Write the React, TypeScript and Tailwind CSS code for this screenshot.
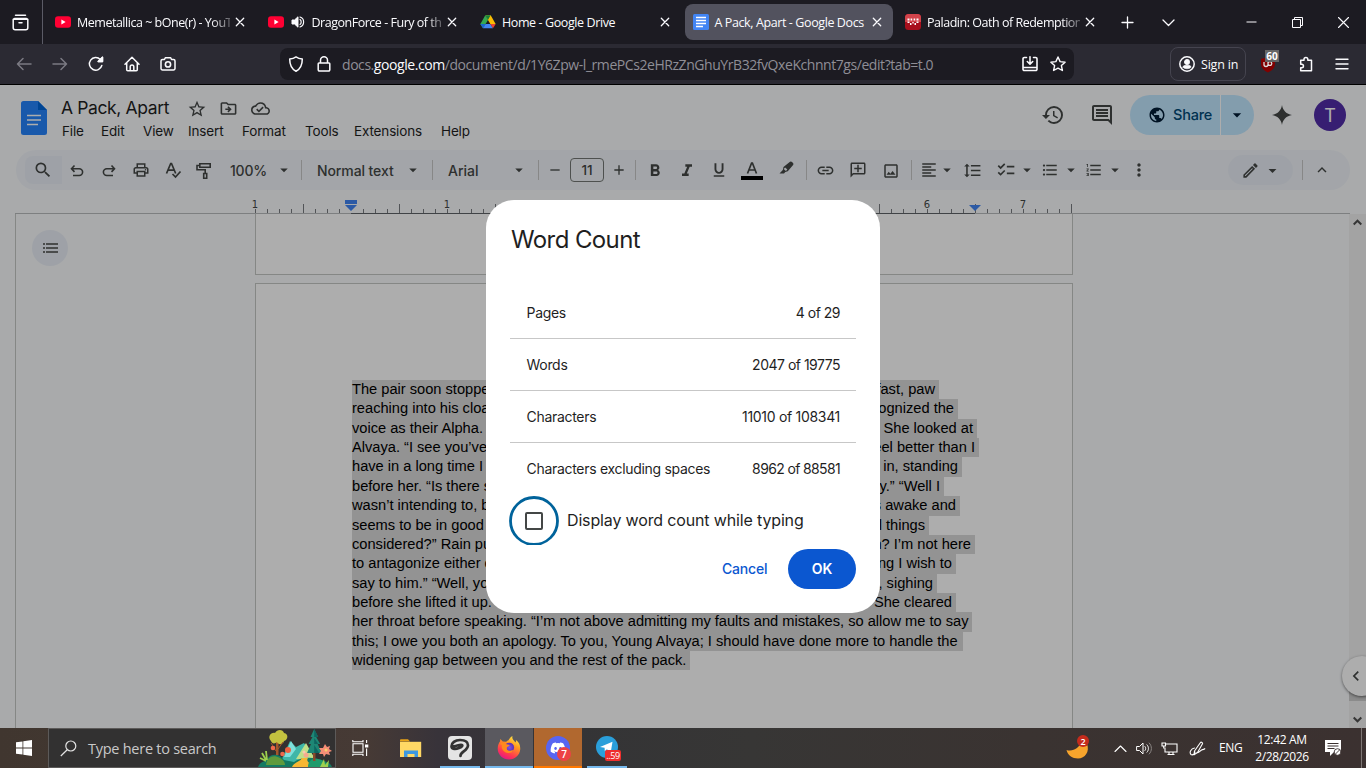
import React from "react";
import {
  MdSearch, MdOutlineLocalPrintshop, MdFormatBold, MdFormatItalic, MdFormatUnderlined,
  MdArrowDropDown, MdAdd, MdRemove, MdLink, MdOutlineAddComment, MdOutlineImage, MdFormatAlignLeft,
  MdFormatLineSpacing, MdChecklist, MdFormatListBulleted, MdFormatListNumbered, MdMoreVert, MdOutlineModeEdit,
  MdKeyboardArrowUp, MdKeyboardArrowLeft, MdHistory, MdOutlineComment, MdPublic, MdStarBorder,
  MdOutlineDriveFileMove, MdOutlineCloudDone,
} from "react-icons/md";
import { FaDiscord } from "react-icons/fa";

const SEGOE = "font-['Open_Sans',sans-serif]";
const GOOGLE = "font-['Inter',sans-serif]";

type SvgProps = { className?: string; box?: string; size?: number; children: React.ReactNode };
const Line = ({ className = "", box = "0 0 16 16", size = 16, children }: SvgProps) => (
  <svg width={size} height={size} viewBox={box} fill="none" stroke="currentColor" strokeWidth="1.3" strokeLinecap="round" strokeLinejoin="round" className={`shrink-0 ${className}`}>
    {children}
  </svg>
);

/* ---------- browser chrome ---------- */

const YouTubeIcon = () => (
  <svg width="16" height="16" viewBox="0 0 16 16" className="shrink-0">
    <rect x="0" y="2.3" width="16" height="11.4" rx="3" fill="#ff0033" />
    <path d="M6.4 5.6 10.6 8 6.4 10.4z" fill="#fff" />
  </svg>
);

const DriveIcon = () => (
  <svg width="16" height="16" viewBox="0 0 24 24" className="shrink-0">
    <path d="M8 2h8l-4 7z" fill="#188038" />
    <path d="M8 2 .5 15 4.500 21.500 12 9z" fill="#34a853" />
    <path d="M16 2 23.500 15H15.500L12 9 8.500 2z" fill="#fbbc04" />
    <path d="M8 2l4 7 3.500-6.500L16 2z" fill="#188038" />
    <path d="M.5 15h8l-4 6.500z" fill="#1967d2" />
    <path d="M8.500 15h7l4 6.500h-15z" fill="#4285f4" />
    <path d="M15.500 15h8l-4 6.500z" fill="#ea4335" />
  </svg>
);

const DocsTabIcon = () => (
  <svg width="16" height="16" viewBox="0 0 16 16" className="shrink-0">
    <rect width="16" height="16" rx="1.500" fill="#4285f4" />
    <path d="M3 3.500h10M3 6.500h10M3 9.500h10M3 12.500h7" stroke="#fff" strokeWidth="1.400" />
  </svg>
);

const ForumIcon = () => (
  <svg width="16" height="16" viewBox="0 0 16 16" className="shrink-0">
    <rect width="16" height="16" rx="3.500" fill="#a80f1c" />
    <path d="M0 8V3.500A3.500 3.500 0 0 1 3.500 0h9A3.500 3.500 0 0 1 16 3.500V8z" fill="#d2434b" />
    <path d="M2.500 4.500h2v2h-2zM5.600 4.500h1.600v2H5.600zM8.600 4.500h1.600v2H8.600zM11.500 4.500h2v2h-2zM2.500 7.500h2v1.500h-2zM11.500 7.500h2v1.500h-2zM5 9h1.500v2H5zM9.500 9H11v2H9.500zM7.300 8h1.400v1.500H7.300z" fill="#fff" />
  </svg>
);

const SpeakerIcon = () => (
  <svg width="14" height="14" viewBox="0 0 14 14" className="mr-[7px] ml-[7px] shrink-0">
    <path d="M1 5h2.500L7 1.800v10.400L3.500 9H1z" fill="#fbfbfe" stroke="#fbfbfe" strokeLinejoin="round" />
    <path d="M9 4.500c1.600 1.200 1.600 3.800 0 5M9 2c4.800 1.500 4.800 8.500 0 10" fill="none" stroke="#fbfbfe" strokeWidth="1.200" strokeLinecap="round" />
  </svg>
);

const CloseGlyph = () => (
  <Line size={10} box="0 0 10 10" className="text-[#fbfbfe]"><path d="M1.300 1.300 8.700 8.700M8.700 1.300 1.300 8.700" /></Line>
);

type TabProps = { icon: React.ReactNode; title: string; active?: boolean; audio?: boolean; fade?: boolean };
const Tab = ({ icon, title, active, audio, fade }: TabProps) => (
  <div className="flex h-11 w-[212.500px] shrink-0 items-center pr-[4px]">
    <div className={`flex h-9 w-full min-w-0 items-center rounded-lg pr-[6px] pl-2 ${active ? "bg-[#52525e]" : ""}`}>
      {icon}
      {audio ? <SpeakerIcon /> : <span className="w-[6px] shrink-0" />}
      <span className={`min-w-0 flex-1 pt-[2px] text-[12.500px] whitespace-nowrap text-[#fbfbfe] ${fade ? "tracking-[-0.480px] [mask-image:linear-gradient(to_right,black_88%,rgba(0,0,0,0.3))]" : "tracking-[-0.400px]"}`}>
        {title}
      </span>
      <span className="flex w-[20px] shrink-0 justify-center"><CloseGlyph /></span>
    </div>
  </div>
);

const TabStrip = () => (
  <div className="flex h-11 items-center bg-[#1c1b22] text-[#fbfbfe]">
    <div className="flex h-full w-[43px] shrink-0 items-center justify-center border-r border-[#5b5b66] pr-[3px] pl-[1px]">
      <Line size={17} box="0 0 17 17"><path d="M3.500 1.200h10M1.200 5.200h14.600v8.600a2 2 0 0 1-2 2H3.200a2 2 0 0 1-2-2zM1.200 6a1.500 1.500 0 0 1 1.500-1.500h11.600A1.500 1.500 0 0 1 15.800 6M7 8.800h3" strokeWidth="1.500" /></Line>
    </div>
    <div className="ml-1 flex shrink-0">
      <Tab icon={<YouTubeIcon />} title="Memetallica ~ bOne(r) - YouT" fade />
      <Tab icon={<YouTubeIcon />} title="DragonForce - Fury of the" audio fade />
      <Tab icon={<DriveIcon />} title="Home - Google Drive" />
      <Tab icon={<DocsTabIcon />} title="A Pack, Apart - Google Docs" active />
      <Tab icon={<ForumIcon />} title="Paladin: Oath of Redemption" fade />
    </div>
    <div className="flex w-8 shrink-0 justify-center"><Line size={13} box="0 0 13 13" className="ml-[3px]"><path d="M6.500 1v11M1 6.500h11" /></Line></div>
    <div className="ml-[14px] flex w-8 shrink-0 justify-center"><Line size={13} box="0 0 13 13" className="mr-[7px]"><path d="M1 4l5.500 5.500L12 4" /></Line></div>
    <div className="ml-auto flex shrink-0">
      <div className="flex w-[46px] justify-center"><Line size={11} box="0 0 11 11"><path d="M.5 5h10" strokeLinecap="butt" strokeWidth="1" /></Line></div>
      <div className="flex w-[46px] justify-center"><Line size={11} box="0 0 11 11"><path d="M.5 2.500h8v8h-8zM2.500 2.500v-2h8v8h-2" strokeWidth="1" strokeLinecap="butt" strokeLinejoin="miter" /></Line></div>
      <div className="flex w-[46px] justify-center"><Line size={11} box="0 0 11 11"><path d="M.5.5l10 10M10.500.5l-10 10" strokeWidth="1.100" /></Line></div>
    </div>
  </div>
);

const NavBar = () => (
  <div className={`flex h-[41px] items-center border-b border-black bg-[#2b2a33] text-[#fbfbfe] ${SEGOE}`}>
    <div className="ml-4 flex w-[264px] shrink-0 items-center gap-5">
      <Line className="text-[#7b7a83]"><path d="M7 2.500 1.500 8 7 13.500M1.500 8H15" strokeWidth="1.500" /></Line>
      <Line className="text-[#7b7a83]"><path d="M9 2.500 14.500 8 9 13.500M14.500 8H1" strokeWidth="1.500" /></Line>
      <Line><path d="M13.800 9.500A6.300 6.300 0 1 1 12.300 3.500M14.500 1.200v4.300h-4.300z" strokeWidth="1.500" /><path d="M14.500 1.200v4.300h-4.300z" fill="currentColor" /></Line>
      <Line><path d="M1 8.200 8 1.300l7 6.900M2.700 7v6.800a1 1 0 0 0 1 1h8.600a1 1 0 0 0 1-1V7M6.200 14.500v-3.700a1.800 1.800 0 0 1 3.600 0v3.700" strokeWidth="1.500" /></Line>
      <Line><path d="M2.500 3.500h2l.8-1.800h5.400l.8 1.800h2A1.500 1.500 0 0 1 15 5v7.500a1.500 1.500 0 0 1-1.500 1.500h-11A1.500 1.500 0 0 1 1 12.500V5a1.500 1.500 0 0 1 1.500-1.500z" strokeWidth="1.500" /><circle cx="8" cy="8.400" r="2.600" strokeWidth="1.600" /></Line>
    </div>
    <div className="flex h-8 w-[794px] shrink-0 items-center rounded-lg bg-[#1c1b22] pl-2">
      <Line><path d="M8 .9c2 1.500 4 2 6.300 2.100 0 5.500-1.300 9.800-6.300 12.200C3 12.800 1.700 8.500 1.700 3 4 2.900 6 2.400 8 .9z" strokeWidth="1.500" /></Line>
      <Line className="ml-3"><path d="M3 7h10a.8.8 0 0 1 .8.8v6a1.200 1.200 0 0 1-1.200 1.200H3.400a1.200 1.200 0 0 1-1.200-1.200v-6A.8.8 0 0 1 3 7zM4.500 7V4.300a3.500 3.500 0 0 1 7 0V7" strokeWidth="1.500" /></Line>
      <span className="ml-[10px] w-[680px] text-[14px] tracking-[-0.438px] whitespace-nowrap text-[#8f8e96]">
        docs.<span className="text-[#fbfbfe]">google.com</span>/document/d/1Y6Zpw-l_rmePCs2eHRzZnGhuYrB32fvQxeKchnnt7gs/edit?tab=t.0
      </span>
      <Line><path d="M4.500 1.500H2.300A1.300 1.300 0 0 0 1 2.800v10.400a1.300 1.300 0 0 0 1.300 1.300h11.400a1.300 1.300 0 0 0 1.300-1.300V2.800a1.300 1.300 0 0 0-1.300-1.300h-2.200M8 .8v7M5.300 5.500 8 8.200l2.700-2.700M1 11.500h14" strokeWidth="1.600" /></Line>
      <Line className="ml-3"><path d="m8 1 2.100 4.600 5 .6-3.700 3.400 1 4.900L8 12.100l-4.400 2.400 1-4.900L.9 6.200l5-.6z" strokeWidth="1.400" /></Line>
    </div>
    <div className="ml-24 flex h-[34px] w-[76px] shrink-0 items-center rounded-lg border border-[#45444f] pl-2">
      <Line><circle cx="8" cy="8" r="7.200" strokeWidth="1.500" /><circle cx="8" cy="6" r="2.300" fill="currentColor" /><path d="M3.900 11.300c0-1.700 1.500-2 4.100-2s4.100.3 4.100 2A6 6 0 0 1 8 12.800a6 6 0 0 1-4.100-1.500z" fill="currentColor" strokeWidth=".5" /></Line>
      <span className="mt-[2px] ml-[6px] text-[12.500px] tracking-[-0.200px] whitespace-nowrap">Sign in</span>
    </div>
    <div className="relative ml-[14px] h-[34px] w-5 shrink-0">
      <svg width="16" height="18" viewBox="0 0 16 18" className="mt-[9px]">
        <path d="M8 .5c2 1.500 4.500 2 7 2.200V8c0 4-3 6.500-7 8.500C4 14.500 1 12 1 8V2.700C3.500 2.500 6 2 8 .5z" fill="#800000" />
        <path d="M4 6v2.500a2 2 0 0 0 4 0V6M8 7.500a1.900 1.900 0 1 0 3.800 0 1.900 1.900 0 1 0-3.800 0" fill="none" stroke="#ddd" strokeWidth="1.300" />
      </svg>
      <span className="absolute top-[3px] left-[5px] flex h-3 w-[14px] items-center justify-center bg-[#666] text-[10px] leading-none font-bold text-white">60</span>
    </div>
    <Line className="ml-[18px]"><path d="M6 3.300a1.900 1.900 0 0 1 3.800 0v1h3.700v10.500H2.700v-3h1a1.700 1.700 0 0 0 0-3.500h-1V4.300H6z" strokeWidth="1.500" /></Line>
    <Line className="ml-5"><path d="M2 3.200h12M2 8h12M2 12.800h12" strokeWidth="1.400" /></Line>
  </div>
);

/* ---------- document header and toolbar ---------- */

const MENUS: [string, string][] = [
  ["File", "w-[39px]"], ["Edit", "w-[42px]"], ["View", "w-[45px]"], ["Insert", "w-[54px]"],
  ["Format", "w-[63px]"], ["Tools", "w-[49px]"], ["Extensions", "w-[87px]"], ["Help", "w-[40px]"],
];

const DocHeader = () => (
  <div className="flex h-[65px] shrink-0 text-[#444746]">
    <svg width="26" height="34" viewBox="0 0 26 34" className="mt-4 ml-[21px] shrink-0">
      <path d="M2.500 0H17l9 9v22.500a2.500 2.500 0 0 1-2.500 2.500h-21A2.500 2.500 0 0 1 0 31.500v-29A2.500 2.500 0 0 1 2.500 0z" fill="#2684fc" />
      <path d="M17 0l9 9h-9z" fill="#0066da" />
      <path d="M6 14.500h14M6 19h14M6 23.500h11" stroke="#fff" strokeWidth="1.700" />
    </svg>
    <div className="ml-[14px] w-[960px] shrink-0 pt-[11px]">
      <div className="flex h-6 items-center">
        <span className={`w-[126px] text-[17.500px] tracking-[-0.380px] whitespace-nowrap text-[#1f1f1f] ${GOOGLE}`}>A Pack, Apart</span>
        <MdStarBorder size={20} className="mt-px" />
        <MdOutlineDriveFileMove size={19} className="ml-[12px] mt-px" />
        <MdOutlineCloudDone size={19} className="ml-[13px]" />
      </div>
      <div className={`flex h-[22px] items-center pl-px text-[13.500px] text-[#1f1f1f] ${GOOGLE}`}>
        {MENUS.map(([m, w]) => <span key={m} className={`shrink-0 tracking-[-0.150px] whitespace-nowrap ${w}`}>{m}</span>)}
      </div>
    </div>
    <div className="mt-[10px] ml-[20px] flex h-10 items-center">
      <MdHistory size={24} />
      <MdOutlineComment size={24} className="ml-[25px]" />
      <div className="ml-4 flex h-10 w-[124px] items-center rounded-full bg-[#c2e7ff] text-[#001d35]">
        <MdPublic size={18} className="ml-[18px]" />
        <span className={`ml-[7px] text-[14.500px] font-medium tracking-[-0.200px] text-[#004a77] ${GOOGLE}`}>Share</span>
        <span className="ml-auto h-10 w-px bg-white" />
        <span className="flex w-[33px] justify-center pr-px"><MdArrowDropDown size={20} /></span>
      </div>
      <svg width="20" height="20" viewBox="0 0 20 20" className="ml-[18px]"><path d="M10 0c.8 5.500 4.500 9.200 10 10-5.500.8-9.200 4.500-10 10-.8-5.500-4.500-9.200-10-10C5.500 9.200 9.200 5.500 10 0z" fill="#444746" /></svg>
      <span className={`ml-[22px] flex size-8 items-center justify-center rounded-full bg-[#512da8] pt-px text-[18px] text-white ${GOOGLE}`}>T</span>
    </div>
  </div>
);

const Bar = ({ className }: { className: string }) => <span className={`h-5 w-px shrink-0 bg-[#c7c7c7] ${className}`} />;
const Ico = ({ className, children }: { className: string; children: React.ReactNode }) => (
  <span className={`flex h-5 w-5 shrink-0 items-center justify-center ${className}`}>{children}</span>
);
const Caret = ({ className }: { className: string }) => <Ico className={className}><MdArrowDropDown size={18} /></Ico>;

const UndoArrow = () => (
  <svg width="16" height="16" viewBox="0 0 16 16" fill="none" stroke="currentColor" strokeWidth="1.600"><path d="M5.500 3.500 2.500 6.700l3 3.200M2.800 6.700h7.400a3.300 3.300 0 0 1 0 6.800H4" /></svg>
);

const Toolbar = () => (
  <div className={`ml-4 flex h-10 w-[1334px] shrink-0 items-center rounded-full bg-[#f0f4f9] text-[14px] font-medium text-[#444746] ${GOOGLE}`}>
    <span className="ml-[9px] flex h-7 w-[37px] shrink-0 items-center justify-center rounded-l-lg bg-[#e9eef6] pr-px"><MdSearch size={20} /></span>
    <Ico className="ml-[5px]"><UndoArrow /></Ico>
    <Ico className="ml-3"><span className="-scale-x-100"><UndoArrow /></span></Ico>
    <Ico className="ml-3"><MdOutlineLocalPrintshop size={18} /></Ico>
    <Ico className="ml-3">
      <svg width="18" height="18" viewBox="0 0 18 18" fill="none" stroke="currentColor" strokeWidth="1.700"><path d="M2.500 12.500 6.700 2.500h.8l4.200 10M4 9.200h6.200M8.500 13l3 3 5-5.500" /></svg>
    </Ico>
    <Ico className="ml-[11px]">
      <svg width="18" height="18" viewBox="0 0 18 18" fill="none" stroke="currentColor" strokeWidth="1.600" className="mt-px"><path d="M4.800 1.800h10.400v3.400H4.800zM4.500 3.500H2v4.200h8.200V11M8.700 11.500h3v4.700h-3z" /></svg>
    </Ico>
    <span className="ml-4 w-[37px] shrink-0 pt-px tracking-[-0.200px] whitespace-nowrap">100%</span>
    <Caret className="ml-[7px]" />
    <Bar className="ml-[7px]" />
    <span className="ml-[15px] w-[77px] shrink-0 tracking-[-0.100px] whitespace-nowrap">Normal text</span>
    <Caret className="ml-[9px]" />
    <Bar className="ml-[9px]" />
    <span className="ml-[15px] w-[30px] shrink-0 whitespace-nowrap">Arial</span>
    <Caret className="ml-[31px]" />
    <Bar className="ml-[9px]" />
    <Ico className="ml-[6px]"><MdRemove size={16} /></Ico>
    <span className="ml-[5px] flex h-6 w-[34px] shrink-0 items-center justify-center rounded border border-[#747775] text-[13.500px]">11</span>
    <Ico className="ml-[5px]"><MdAdd size={16} /></Ico>
    <Bar className="ml-[6px]" />
    <Ico className="ml-[9px]"><MdFormatBold size={20} className="mt-px" /></Ico>
    <Ico className="ml-3"><MdFormatItalic size={20} className="mt-px" /></Ico>
    <Ico className="ml-3"><MdFormatUnderlined size={18} /></Ico>
    <span className="ml-3 flex h-5 w-[22px] shrink-0 flex-col items-center justify-end">
      <svg width="12" height="12" viewBox="0 0 12 12" fill="none" stroke="currentColor" strokeWidth="1.700"><path d="M1.500 11.500 5.600 1h.8l4.100 10.500M3 8h6" /></svg>
      <span className="mt-[2px] h-1 w-[22px] bg-black" />
    </span>
    <Ico className="ml-[13px]">
      <svg width="17" height="17" viewBox="0 0 17 17" className="mb-[3px]"><path d="M5.500 7 12 1.800a1.500 1.500 0 0 1 2 .1l1 1a1.500 1.500 0 0 1 .1 2L9.800 11.300l-2.500.6L6 13.500H1.500L4.800 10z" fill="currentColor" /><path d="M6.400 8.300 8.600 10.300" stroke="#f0f4f9" strokeWidth="2.200" /></svg>
    </Ico>
    <Bar className="ml-[10px]" />
    <Ico className="ml-[9px]"><MdLink size={19} className="mt-px mr-px" /></Ico>
    <Ico className="ml-3"><span className="-scale-x-100"><MdOutlineAddComment size={18} /></span></Ico>
    <Ico className="ml-[13px]"><MdOutlineImage size={18} className="mt-px" /></Ico>
    <Bar className="ml-[10px]" />
    <Ico className="ml-[7px]"><MdFormatAlignLeft size={18} /></Ico>
    <Caret className="-ml-[2px]" />
    <Ico className="ml-[6px]"><MdFormatLineSpacing size={19} className="mr-px" /></Ico>
    <Ico className="ml-[13px]"><MdChecklist size={20} /></Ico>
    <Caret className="ml-px" />
    <Ico className="ml-[3px]"><MdFormatListBulleted size={18} /></Ico>
    <Caret className="ml-px" />
    <Ico className="ml-[3px]"><MdFormatListNumbered size={18} /></Ico>
    <Caret className="ml-px" />
    <Ico className="ml-1"><MdMoreVert size={20} /></Ico>
    <span className="ml-[79px] flex h-[30px] w-[65px] shrink-0 items-center rounded-full bg-[#e9eef6] pl-[13px]">
      <MdOutlineModeEdit size={19} /><MdArrowDropDown size={19} className="ml-[3px]" />
    </span>
    <Bar className="ml-[9px]" />
    <Ico className="ml-[9px]"><MdKeyboardArrowUp size={18} /></Ico>
  </div>
);

/* ---------- ruler and pages ---------- */

const TICKS = Array.from({ length: 69 }, (_, i) => i);

const Ruler = () => (
  <div className="mt-2 ml-[15px] flex h-4 w-[1335px] shrink-0 border-b border-[#b9bbbd] pl-[240px] text-[#444746]">
    {TICKS.map((i) => {
      const fromMargin = i - 8;
      const inch = fromMargin % 8 === 0;
      const half = fromMargin % 4 === 0 && !inch;
      const inside = i >= 8 && i < 60;
      return (
        <span key={i} className={`relative flex h-4 w-3 shrink-0 items-end border-b ${inside ? "border-[#5f6368]" : "border-[#b9bbbd]"}`}>
          {i !== 8 && <span className={`w-px bg-[#7a7d80] ${half ? "h-[9px]" : "h-1"}`} />}
          {inch && i !== 8 && (
            <span className="absolute top-[2px] -left-[6px] w-3 text-center font-['DejaVu_Sans',sans-serif] text-[10px] leading-none">{Math.abs(fromMargin / 8)}</span>
          )}
          {i === 8 && (
            <svg width="12" height="12" viewBox="0 0 12 12" className="absolute top-[2px] -left-[6px]"><path d="M0 0h12v4H0zM0 5h12L6 11z" fill="#4285f4" /></svg>
          )}
          {i === 60 && (
            <svg width="12" height="7" viewBox="0 0 12 7" className="absolute top-[7px] -left-[6px]"><path d="M0 0h12L6 6z" fill="#4285f4" /></svg>
          )}
        </span>
      );
    })}
  </div>
);

const LINES: { w: string; left: string; right?: string }[] = [
  { w: "w-[587px]", left: "The pair soon stopped", right: "fast, paw" },
  { w: "w-[606px]", left: "reaching into his cloak", right: "recognized the" },
  { w: "w-[625px]", left: "voice as their Alpha.", right: "She looked at" },
  { w: "w-[627px]", left: "Alvaya. “I see you’ve", right: "feel better than I" },
  { w: "w-[610px]", left: "have in a long time I", right: "in, standing" },
  { w: "w-[592px]", left: "before her. “Is there some", right: "by.” “Well I" },
  { w: "w-[608px]", left: "wasn’t intending to, but", right: "is awake and" },
  { w: "w-[577px]", left: "seems to be in good", right: "all things" },
  { w: "w-[623px]", left: "considered?” Rain put", right: "then? I’m not here" },
  { w: "w-[604px]", left: "to antagonize either of", right: "thing I wish to" },
  { w: "w-[585px]", left: "say to him.” “Well, you", right: ", sighing" },
  { w: "w-[604px]", left: "before she lifted it up.", right: "She cleared" },
  { w: "w-[620px]", left: "her throat before speaking. “I’m not above admitting my faults and mistakes, so allow me to say" },
  { w: "w-[611px]", left: "this; I owe you both an apology. To you, Young Alvaya; I should have done more to handle the" },
  { w: "w-[338px]", left: "widening gap between you and the rest of the pack." },
];

const Canvas = () => (
  <div className="flex min-h-0 flex-1">
    <div className="ml-[15px] flex w-[240px] shrink-0 border-l border-[#c4c7c5] pt-4 pl-4">
      <span className="flex size-9 items-center justify-center rounded-full bg-[#e9eef6] text-[#444746]">
        <svg width="15" height="10" viewBox="0 0 15 10" stroke="currentColor" strokeWidth="1.700" className="ml-px"><path d="M0 1h2M3 1H15M0 5h2M3 5H15M0 9h2M3 9H15" /></svg>
      </span>
    </div>
    <div className="flex w-[818px] shrink-0 flex-col">
      <div className="h-[61px] shrink-0 border border-t-0 border-[#c4c7c5] bg-white" />
      <div className="mt-2 flex-1 border border-b-0 border-[#c4c7c5] bg-white pt-[96px] pl-[96px] font-['Liberation_Sans',sans-serif] text-[14.667px] leading-[19px] tracking-[-0.010px] text-black">
        {LINES.map((l) => (
          <p key={l.left} className={`flex h-[19.360px] items-start justify-between bg-[#d9d9d9] pr-[4px] whitespace-nowrap ${l.w}`}>
            <span>{l.left}</span>
            {l.right && <span>{l.right}</span>}
          </p>
        ))}
      </div>
    </div>
    <div className="ml-auto flex w-[17px] shrink-0 flex-col items-center justify-between bg-[#f0f0f0] pt-[5px] pb-[5px] text-[#505050]">
      <svg width="9" height="7" viewBox="0 0 9 7" fill="none" stroke="currentColor" strokeWidth="2"><path d="M.7 5.500 4.500 1.700l3.800 3.800" /></svg>
      <span className="mt-auto mb-[15px] h-8 w-[17px] bg-[#cdcdcd]" />
      <svg width="9" height="7" viewBox="0 0 9 7" fill="none" stroke="currentColor" strokeWidth="2"><path d="M.7 1.500 4.500 5.300 8.300 1.500" /></svg>
    </div>
  </div>
);

/* ---------- dialog ---------- */

const COUNTS = [
  ["Pages", "4 of 29", "tracking-[-0.500px]"],
  ["Words", "2047 of 19775", "tracking-[-0.500px]"],
  ["Characters", "11010 of 108341", "tracking-[-0.300px]"],
  ["Characters excluding spaces", "8962 of 88581", "tracking-[-0.640px]"],
];

const Dialog = () => (
  <div className={`mt-[115px] ml-[486px] flex h-[413px] w-[394px] flex-col rounded-[28px] bg-white px-6 text-[#1f1f1f] ${GOOGLE}`}>
    <h1 className="mt-6 h-8 pl-px text-[24px] leading-8 tracking-[-0.600px]">Word Count</h1>
    <div className="mt-[31px]">
      {COUNTS.map(([k, v, track], i) => (
        <div key={k} className={`flex items-center justify-between px-4 text-[14px] ${i < 3 ? "h-[52px] border-b border-[#c7c7c7]" : "mb-px h-[51px]"}`}>
          <span className="pl-[0.500px] tracking-[-0.300px]">{k}</span><span className={track}>{v}</span>
        </div>
      ))}
    </div>
    <div className="flex h-[50px] items-center">
      <svg width="50" height="50" viewBox="0 0 50 50" className="-ml-px shrink-0">
        <circle cx="25" cy="26" r="23.500" fill="none" stroke="#00639b" strokeWidth="2.800" />
        <rect x="17" y="18" width="16" height="16" rx="1" fill="none" stroke="#444746" strokeWidth="2" />
      </svg>
      <span className="ml-2 text-[16px] tracking-[-0.150px]">Display word count while typing</span>
    </div>
    <div className="mt-[4px] flex h-10 items-center justify-end text-[14px] font-medium">
      <span className="mr-[20.500px] pb-px tracking-[-0.150px] text-[#0b57d0]">Cancel</span>
      <span className="flex h-10 w-[68px] items-center justify-center rounded-full bg-[#0b57d0] pb-px font-semibold text-white">OK</span>
    </div>
  </div>
);

/* ---------- taskbar ---------- */

const SearchArt = () => (
  <svg width="76" height="38" viewBox="0 0 76 38" className="shrink-0">
    <path d="M22 34 32 12l6 6 8-4 14 20z" fill="#3fb6a8" />
    <path d="M26 28 33 12l5 8-6 8z" fill="#7fe0dc" />
    <path d="M38 30 48 14l10 18z" fill="#bfe08a" />
    <path d="M0 38c2-6 8-5 10-9 4-5 12-4 16 2l10 2c8-6 22-5 30-1 4 1 7 3 8 6z" fill="#157a62" />
    <path d="M34 38c2-5 8-5 10-9h6c-3 4 4 5 2 9z" fill="#f7b733" />
    <path d="M50 38c0-6 4-9 10-8 6 1 8 4 10 8z" fill="#1f9a6b" />
    <path d="M8 36c1-8 7-11 14-7 4 2 5 5 5 7z" fill="#5f9a3c" />
    <path d="M18 26V10h2.500v16z" fill="#a5562a" />
    <path d="M13 12c-4-4 0-9 4-8 2-4 8-4 9 0 5 1 4 7 0 8-1 4-6 4-7 1-2 2-5 2-6-1z" fill="#c3c23f" />
    <path d="M18 22l-5-8M20 20l5-7" stroke="#a5562a" strokeWidth="1" />
    <path d="M55 32V24h2.500v8z" fill="#8a4a2a" />
    <path d="M56.200 0l4 8h-2l4 7h-2.500l4 9H49l4-9h-2.500l4-7h-2z" fill="#1d8775" />
    <path d="M56.200 0l4 8h-4zM56.200 9l4 6h-4zM56.200 16l5 8h-5z" fill="#0f6660" />
    <circle cx="15" cy="19" r="2.300" fill="#ef6a4c" /><circle cx="30" cy="21" r="3" fill="#f0613f" /><circle cx="24.500" cy="25" r="2.300" fill="#ef6a4c" />
    <path d="M67 15l2 3 3-1-1 3 3 2-3 1 1 3-4-1-2 3-1-3-4 0 2-3-2-3 4 0z" fill="#f58d76" />
    <circle cx="68" cy="21" r="1.500" fill="#f9d06b" />
    <circle cx="48" cy="26" r="2.500" fill="#f6a98f" /><circle cx="46" cy="23" r="1.600" fill="#f9c9b0" />
    <path d="M4 24l4 7M8 22l1 9M2 29l6 3" stroke="#9ed04e" strokeWidth="1.800" />
    <path d="M62 38l4-8 1 6 4-5-1 7z" fill="#9ed04e" />
  </svg>
);

const FirefoxIcon = () => (
  <svg width="24" height="24" viewBox="0 0 24 24">
    <defs>
      <linearGradient id="fox" x1=".8" y1="0" x2=".3" y2="1"><stop offset="0" stopColor="#fff44f" /><stop offset=".35" stopColor="#ff9a1f" /><stop offset=".75" stopColor="#ff3750" /><stop offset="1" stopColor="#e31587" /></linearGradient>
      <radialGradient id="globe"><stop offset="0" stopColor="#7b53e8" /><stop offset="1" stopColor="#5b2fb0" /></radialGradient>
    </defs>
    <path d="M15.500 0c-1 3 1.500 4.500 3 6.500.6-.6.600-1.500.4-2.500 3.500 2.500 4.600 6 4.300 9.500C22.800 19 18 23.500 12 23.500S.700 19 .7 12.800C.7 9.500 1.800 7 3 5.500L3.300 3l2.500 2.500 3.400.3C10 5 10.600 4.500 11.500 4.200c1-1.800 2.200-3.200 4-4.200z" fill="url(#fox)" />
    <circle cx="12.300" cy="11.500" r="4.800" fill="url(#globe)" />
    <path d="M3 8c2-2.200 5-1.800 6.500.3l3.200.8c-.3 1.200-1.700 1.400-2.700 2.200-.6 1.800.2 3.300 2.500 3.400 1.800 0 2.600-.9 4-.4-1 1.700-3 3-5.500 2.700C6.500 16.500 4 12.500 5 9z" fill="#ff8a1c" />
  </svg>
);

const Taskbar = () => (
  <div className={`flex h-10 shrink-0 items-stretch bg-[linear-gradient(to_right,#40362f_0%,#463a35_27%,#38333a_32%,#343436_42%,#373635_55%,#3a3331_75%,#3b3130_100%)] text-white ${SEGOE}`}>
    <div className="flex w-12 shrink-0 items-center justify-center">
      <svg width="16" height="16" viewBox="0 0 16 16" fill="#fff"><path d="M0 2.300 6.500 1.400v6.200H0zM7.300 1.300 16 0v7.600H7.300zM0 8.400h6.500v6.200L0 13.700zM7.300 8.400H16V16l-8.700-1.300z" /></svg>
    </div>
    <div className="flex w-[288px] shrink-0 items-center overflow-hidden border border-[#5c5a59] bg-[#323131]">
      <svg width="17" height="17" viewBox="0 0 17 17" fill="none" stroke="#e4e4e4" strokeWidth="1.200" className="ml-[11px]"><circle cx="10.800" cy="6" r="5" /><path d="M7.200 9.700 .8 16" /></svg>
      <span className="ml-[11px] w-[170px] pt-px text-[14.500px] tracking-[-0.260px] whitespace-nowrap text-[#c9c9c9]">Type here to search</span>
      <SearchArt />
    </div>
    <div className="flex w-12 shrink-0 items-center justify-center">
      <svg width="17" height="16" viewBox="0 0 17 16" fill="none" stroke="#fff" strokeWidth="1.100"><path d="M1 3.800h10v8.400H1zM.8 0v1.700H11V0M.8 16v-1.700H11V16M14.600 0v3M14.600 8.500V16" /><path d="M13 4.500h3.300v3H13z" fill="#fff" stroke="none" /></svg>
    </div>
    <div className="ml-[2px] flex w-[50px] shrink-0 items-center justify-center">
      <svg width="22" height="19" viewBox="0 0 22 19"><path d="M0 1.500C0 .7.500.3 1 .3h7l2 2.200H0z" fill="#e8a317" /><path d="M0 2.800h21.200V18H0z" fill="#ffd865" /><path d="M4 18v-6.500h14V18h-3.500v-3h-7v3z" fill="#3d98e0" /></svg>
    </div>
    <div className="ml-[4px] flex w-10 shrink-0 items-center justify-center border-b-2 border-[#76b9ed] pt-[2px]">
      <svg width="24" height="24" viewBox="0 0 24 24"><rect width="24" height="24" rx="4" fill="#e4e4e4" /><path d="M12.500 20C11.800 16 20 14.800 20 9.300 20 5.200 16 4 12 4 7 4 3.500 7 3.500 10.300c0 3.200 4.500 2.900 7.500 1.800 3.200-1.200 4.500-3.300 2-3.300-3 0-4.500 1.700-7.500 1.500" fill="none" stroke="#333" strokeWidth="2.700" strokeLinecap="round" /></svg>
    </div>
    <div className="ml-[5px] flex w-12 shrink-0 items-center justify-center border-b-2 border-[#76b9ed] bg-[#5a595f] pt-[2px]"><FirefoxIcon /></div>
    <div className="ml-px flex w-12 shrink-0 items-center justify-center border-b-2 border-[#ff7800] bg-[#b1682f] pt-[2px]">
      <span className="relative flex size-6 items-center justify-center rounded-full bg-[#5865f2]">
        <FaDiscord size={16} />
        <span className="absolute top-[11px] left-[11px] flex size-[14px] items-center justify-center rounded-full bg-[#ed4245] text-[10px] leading-none font-semibold">7</span>
      </span>
    </div>
    <div className="ml-[5px] flex w-10 shrink-0 items-center justify-center border-b-2 border-[#76b9ed]">
      <span className="relative flex size-[22px] items-center justify-center rounded-full bg-[#2a9fda]">
        <svg width="22" height="22" viewBox="0 0 22 22"><path d="M4 11 16.500 5.800 14.800 16l-4-2.700-2 2-.2-3.500z" fill="#fff" /></svg>
        <span className="absolute top-[14px] left-[9px] flex h-[11px] w-[16px] items-center justify-center rounded-[2px] bg-[#ee2e2e] text-[9px] leading-none tracking-[-0.400px]">..59</span>
      </span>
    </div>
    <div className="ml-auto flex shrink-0 items-center">
      <span className="relative mr-[22px] h-[24px] w-[26px]">
        <svg width="24" height="24" viewBox="0 0 24 24"><path d="M.5 14C7 16 13.500 12 15 5.500c1-2 4.500-1.500 6 2.500 3 7.500-2 14.500-9 14.500C6.500 22.500 1.500 19 .5 14z" fill="#f7a42c" /></svg>
        <span className="absolute -top-px left-[11px] flex size-3 items-center justify-center rounded-full bg-[#c42b1c] text-[9px] leading-none font-semibold">2</span>
      </span>
      <Line size={13} box="0 0 13 13"><path d="M1 9.500 6.500 4l5.500 5.500" strokeWidth="1.100" /></Line>
      <Line size={17} box="0 0 17 16" className="ml-[9px]"><path d="M1 6h2.500L7 2.500v11L3.500 10H1zM9 6c1 1 1 3 0 4M11 4.300c2 2 2 5.400 0 7.400" strokeWidth="1" /><path d="M13.200 2.500c3 3 3 8 0 11" strokeWidth="1" stroke="#8a8583" /></Line>
      <Line size={17} box="0 0 17 16" className="ml-[8px]"><path d="M5 3.500h11v8H4V7M8 11.500V14M12 11.500V14M6.500 14h7M1 2.500h3.500v3H1zM2.700 5.500V8" strokeWidth="1.100" strokeLinejoin="miter" strokeLinecap="butt" /></Line>
      <Line size={17} box="0 0 17 16" className="ml-[11px]"><path d="M5.500 10.500 11.500 2c.6-.8 2.500.2 2 1.300L8.500 12 5 14.300zM5.500 7.500C2 8 0 12 2 14c2 1.200 3.500-1 4-2.500M8 12c1.500 1 3-1.500 4.500-2.500 1-.7 1.500 0 3.300-1.300" strokeWidth="1.100" /></Line>
      <span className="ml-[13px] w-[24px] text-[12px] tracking-[-0.300px]">ENG</span>
      <div className="mb-px ml-[9px] flex w-[60px] flex-col items-center text-[12px] leading-[17px] tracking-[-0.350px] whitespace-nowrap"><span>12:42 AM</span><span>2/28/2026</span></div>
      <svg width="17" height="17" viewBox="0 0 17 17" className="ml-[13px]"><path d="M0 0h16v12h-7l-4 4v-4H0z" fill="#fff" /><path d="M2.500 3.500h11M2.500 6h11M2.500 8.500h7" stroke="#3b3130" strokeWidth="1" /><circle cx="12.500" cy="12" r="3.300" fill="#fff" stroke="#3b3130" strokeWidth=".9" /><path d="M10.300 14.200l4.400-4.400" stroke="#3b3130" strokeWidth=".9" /></svg>
      <span className="ml-[19px] h-10 w-[5px] border-l border-[#7d7674]" />
    </div>
  </div>
);

export default function App() {
  return (
    <div className="flex h-screen w-[1366px] flex-col overflow-hidden bg-black">
      <div className={SEGOE}><TabStrip /></div>
      <NavBar />
      <main className="relative flex min-h-0 flex-1 flex-col overflow-hidden bg-[#f9fbfd]">
        <DocHeader />
        <Toolbar />
        <Ruler />
        <Canvas />
        <span className="absolute top-[571px] left-[1342px] flex size-10 items-center rounded-full bg-white pl-1 text-[#444746] shadow-[0_1px_3px_rgba(0,0,0,0.5)]"><MdKeyboardArrowLeft size={20} /></span>
        <div className="absolute inset-0 bg-black/32"><Dialog /></div>
      </main>
      <Taskbar />
    </div>
  );
}
